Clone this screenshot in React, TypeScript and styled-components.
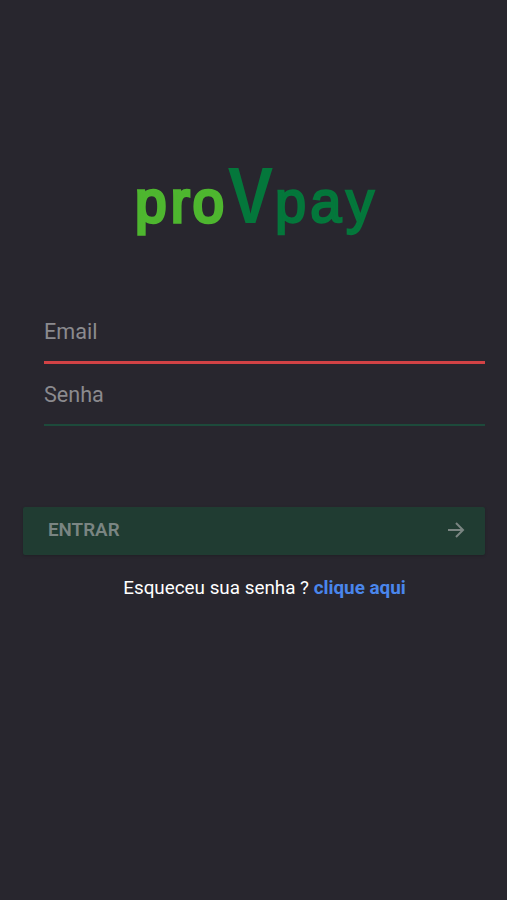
import React from 'react';
import styled, { createGlobalStyle } from 'styled-components';

const Global = createGlobalStyle`
  * { box-sizing: border-box; }
  body { margin: 0; background: #28262e; font-family: Roboto, sans-serif; }
`;
const Screen = styled.main`
  width: 507px;
  height: 900px;
  padding: 150px 22px 0 23px;
  background: #28262e;
`;
const Logo = styled.svg`
  display: block;
  width: 462px;
  height: 100px;
  font-family: "Liberation Sans", Arial, sans-serif;
`;
const Fields = styled.form`
  padding: 50px 0 0 21px;
`;
const Field = styled.input<{ $invalid?: boolean }>`
  display: block;
  width: 100%;
  height: ${(p) => (p.$invalid ? 64 : 62)}px;
  padding: ${(p) => (p.$invalid ? '2px 0 0' : '0')};
  border: 0;
  border-bottom: ${(p) => (p.$invalid ? '3px solid #d24245' : '2px solid #1d4a3b')};
  outline: 0;
  background: transparent;
  font: 400 21.6px Roboto, sans-serif;
  &::placeholder { color: #8b8a8e; opacity: 1; }
`;
const Submit = styled.button`
  display: flex;
  align-items: center;
  justify-content: space-between;
  width: 100%;
  height: 48px;
  margin-top: 81px;
  padding: 0 19px 2px 25px;
  border: 0;
  border-radius: 2px;
  background: #203c32;
  box-shadow: 0 1px 3px rgba(0, 0, 0, 0.18);
  color: #7a8582;
  font: 600 18.8px Roboto, sans-serif;
`;
const Help = styled.p`
  margin: 22px 0 0;
  padding-left: 21px;
  text-align: center;
  color: #fff;
  font-size: 18.85px;
  line-height: 22px;
`;
const Link = styled.a`
  color: #4a86ec;
  font-weight: 700;
`;

export default function App() {
  return (
    <Screen>
      <Global />
      <Logo viewBox="0 0 462 100" role="img" aria-label="proVpay">
        <text transform="translate(0 71.7) scale(.95 1)" x="118.2 155.8 178.8" y="0" fontSize="59" fill="#4eb62f" stroke="#4eb62f" strokeWidth="3.6">pro</text>
        <text transform="translate(204.7 72.5) scale(.85 1)" x="0" y="0" fontSize="80" fontWeight="700" fill="#04773b">V</text>
        <text transform="translate(0 71.7) scale(.95 1)" x="265.3 302.3 340.1" y="0" fontSize="59" fill="#04773b" stroke="#04773b" strokeWidth="2.4">pay</text>
      </Logo>
      <Fields>
        <Field $invalid type="email" placeholder="Email" />
        <Field type="password" placeholder="Senha" />
      </Fields>
      <Submit type="button">
        ENTRAR
        <svg width="20" height="20" viewBox="0 0 20 20" fill="none" stroke="currentColor" strokeWidth="2">
          <path d="M2 10h15M10 3l7 7-7 7" />
        </svg>
      </Submit>
      <Help>Esqueceu sua senha ? <Link>clique aqui</Link></Help>
    </Screen>
  );
}
